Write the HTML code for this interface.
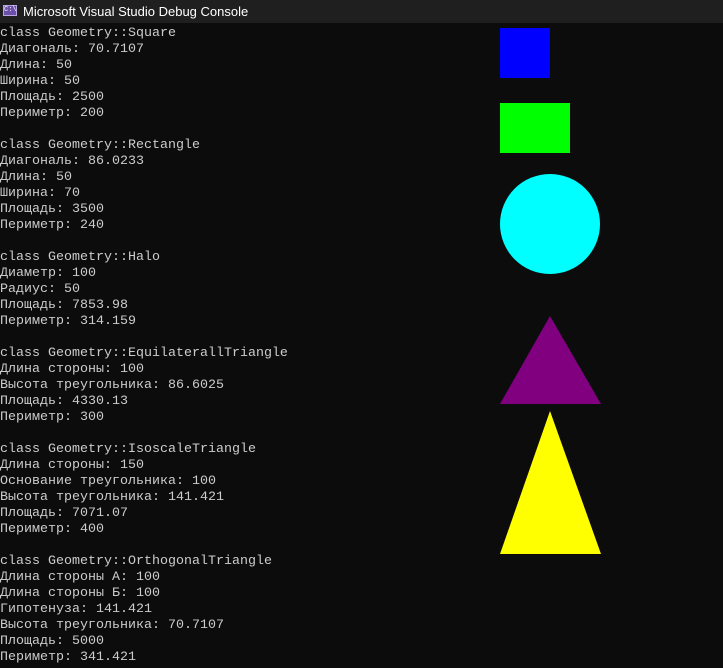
<!DOCTYPE html>
<html><head><meta charset="utf-8"><style>
html,body{margin:0;padding:0;width:723px;height:668px;overflow:hidden;background:#0c0c0c}
#tb{position:absolute;left:0;top:0;width:723px;height:23px;background:#1f1f1f;color:#fff;font:13px "Liberation Sans",sans-serif}
#tb .ic{position:absolute;left:3px;top:5px;width:14px;height:11px;background:#6b4fa8;border:1px solid #b9a6e0;box-sizing:border-box;font:7px "Liberation Mono",monospace;color:#fff;line-height:9px;text-align:center}
#tb .t{position:absolute;left:23px;top:4px}
pre{position:absolute;left:0;top:26px;margin:0;color:#cccccc;font:13.33px/16px "Liberation Mono","DejaVu Sans Mono",monospace}
svg{position:absolute;left:0;top:0}
</style></head><body>
<div id="tb"><div class="ic">C:\</div><div class="t">Microsoft Visual Studio Debug Console</div></div>
<pre>class Geometry::Square
Диагональ: 70.7107
Длина: 50
Ширина: 50
Площадь: 2500
Периметр: 200

class Geometry::Rectangle
Диагональ: 86.0233
Длина: 50
Ширина: 70
Площадь: 3500
Периметр: 240

class Geometry::Halo
Диаметр: 100
Радиус: 50
Площадь: 7853.98
Периметр: 314.159

class Geometry::EquilaterallTriangle
Длина стороны: 100
Высота треугольника: 86.6025
Площадь: 4330.13
Периметр: 300

class Geometry::IsoscaleTriangle
Длина стороны: 150
Основание треугольника: 100
Высота треугольника: 141.421
Площадь: 7071.07
Периметр: 400

class Geometry::OrthogonalTriangle
Длина стороны А: 100
Длина стороны Б: 100
Гипотенуза: 141.421
Высота треугольника: 70.7107
Площадь: 5000
Периметр: 341.421</pre>
<svg width="723" height="668">
<rect x="500" y="28" width="50" height="50" fill="#0000ff"/>
<rect x="500" y="103" width="70" height="50" fill="#00ff00"/>
<circle cx="550" cy="224" r="50" fill="#00ffff"/>
<polygon points="550,316 601,404 500,404" fill="#800080"/>
<polygon points="550,411 601,554 500,554" fill="#ffff00"/>
</svg>
</body></html>
